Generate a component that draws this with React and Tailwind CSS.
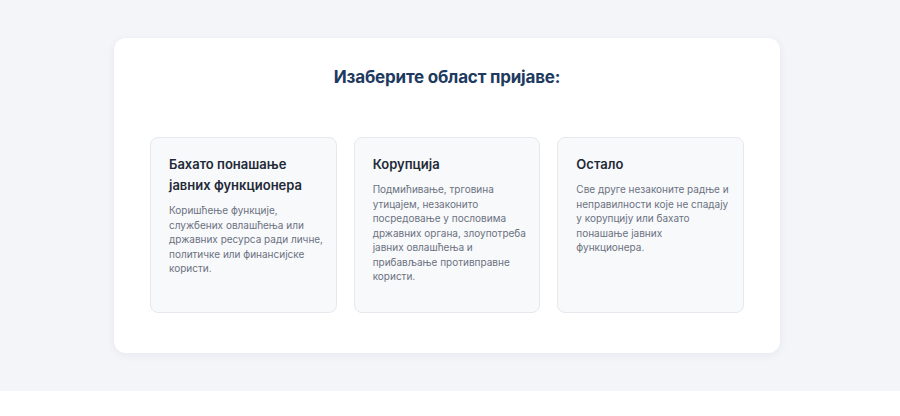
const categories = [
  {
    title: ['Бахато понашање', 'јавних функционера'],
    lines: [
      'Коришћење функције,',
      'службених овлашћења или',
      'државних ресурса ради личне,',
      'политичке или финансијске',
      'користи.',
    ],
  },
  {
    title: ['Корупција'],
    lines: [
      'Подмићивање, трговина',
      'утицајем, незаконито',
      'посредовање у пословима',
      'државних органа, злоупотреба',
      'јавних овлашћења и',
      'прибављање противправне',
      'користи.',
    ],
  },
  {
    title: ['Остало'],
    lines: [
      'Све друге незаконите радње и',
      'неправилности које не спадају',
      'у корупцију или бахато',
      'понашање јавних',
      'функционера.',
    ],
  },
]

function CategoryCard({ title, lines }) {
  return (
    <div className="bg-[#f8f9fb] border border-[#e6e8ee] rounded-lg pt-[16px] pl-[18px] pr-[8px] pb-6 h-[176px]">
      <h3 className="text-[13px] leading-[21px] font-semibold text-[#1f2937]">
        {title.map((t) => (
          <span key={t} className="block whitespace-nowrap">{t}</span>
        ))}
      </h3>
      <p className="mt-[7px] text-[10px] leading-[14.5px] text-[#6b7280]">
        {lines.map((l) => (
          <span key={l} className="block whitespace-nowrap">{l}</span>
        ))}
      </p>
    </div>
  )
}

export default function App() {
  return (
    <div className="font-['Inter',sans-serif] bg-white min-h-[416px]">
      <div className="bg-[#f4f5f9] h-[391px] pt-[38px]">
        <div className="ml-[114px] w-[666px] bg-white rounded-xl shadow-[0_2px_10px_rgba(30,40,80,0.06)] px-9 pt-[28px] pb-[40px]">
          <h2 className="text-center text-[17px] leading-[22px] font-bold text-[#1e3a5f] tracking-[-0.2px]">
            Изаберите област пријаве:
          </h2>

          {/* Categories */}
          <div className="grid grid-cols-3 gap-[17px] mt-[49px]">
            {categories.map((c) => (
              <CategoryCard key={c.title[0]} title={c.title} lines={c.lines} />
            ))}
          </div>
        </div>
      </div>
    </div>
  )
}
